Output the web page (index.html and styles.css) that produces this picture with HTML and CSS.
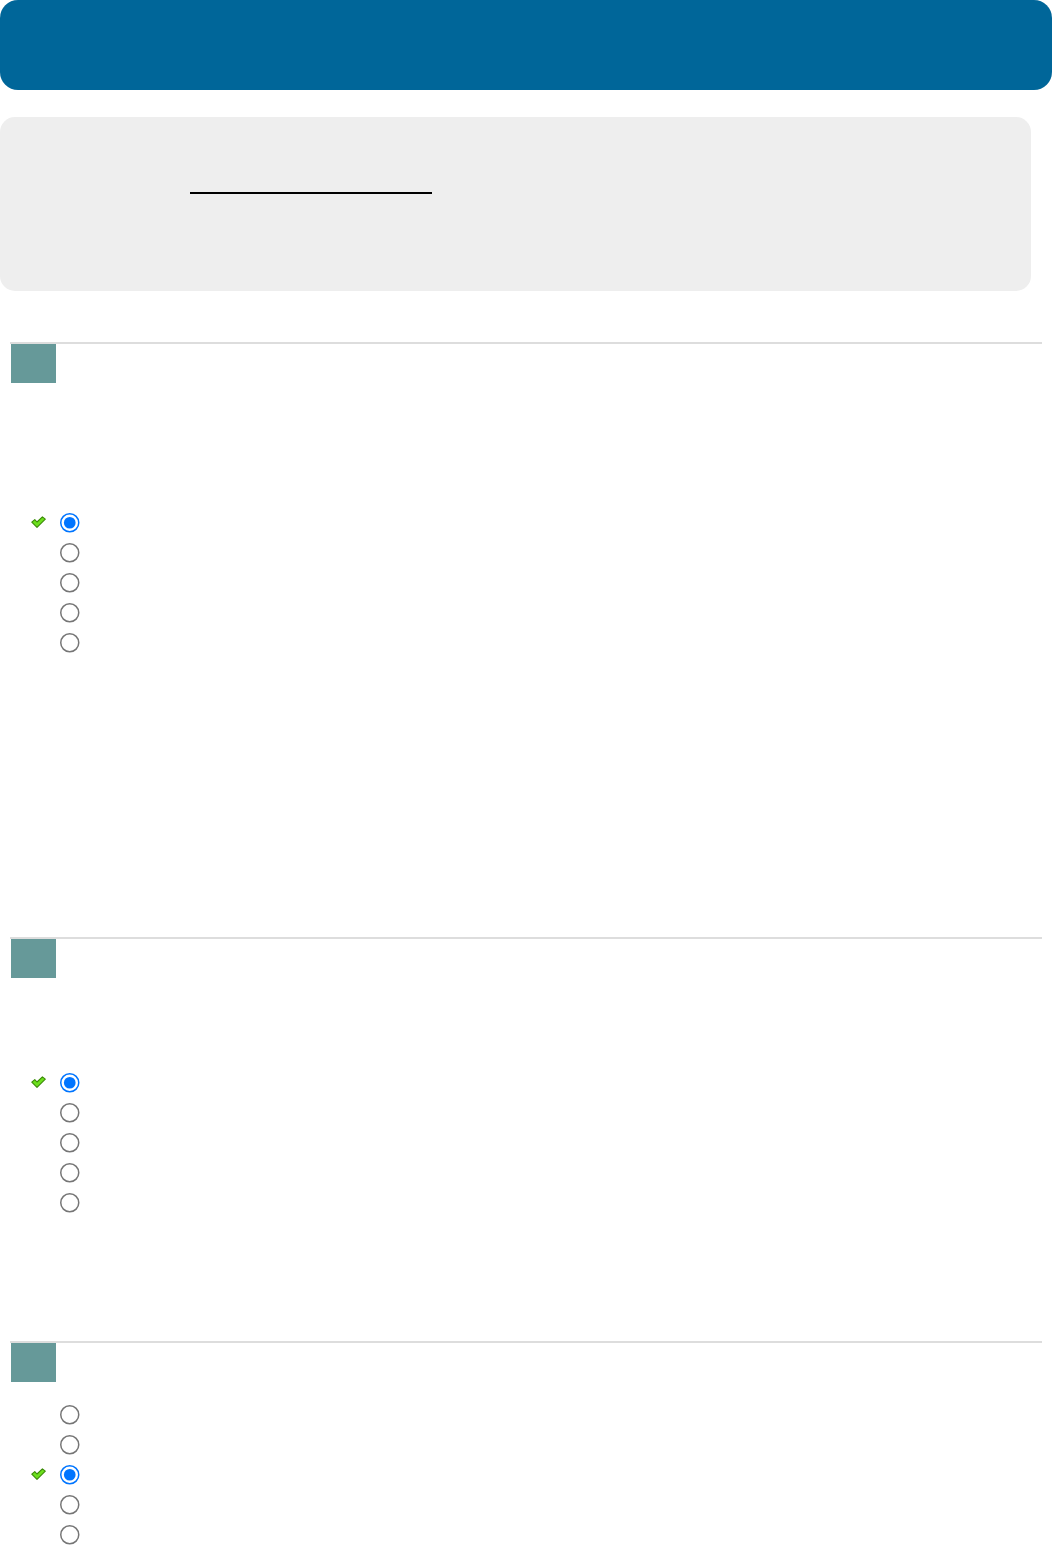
FILE: index.html
```html
<!DOCTYPE html>
<html>
<head>
  <title>Quiz review</title>
  <link rel="stylesheet" href="styles.css">
</head>
<body>
  <div class="banner"></div>

  <div class="summary">
    <span class="blank"></span>
  </div>

  <!-- question 1 -->
  <div class="que">
    <div class="qno"></div>
    <div class="qtext q1-text"></div>
    <div class="answers">
      <label class="opt"><span class="tick"><svg width="15" height="12" viewBox="0 0 15 12"><path d="M0.8 6.2 L3.8 3.6 L6 6 L11.4 0.8 L14.3 3.2 L6 11.3 Z" fill="#6ce01c" stroke="#3b8a08" stroke-width="1.1" stroke-linejoin="round"/></svg></span><input type="radio" name="q1" checked></label>
      <label class="opt"><span class="tick"></span><input type="radio" name="q1"></label>
      <label class="opt"><span class="tick"></span><input type="radio" name="q1"></label>
      <label class="opt"><span class="tick"></span><input type="radio" name="q1"></label>
      <label class="opt"><span class="tick"></span><input type="radio" name="q1"></label>
    </div>
    <div class="feedback q1-after"></div>
  </div>

  <!-- question 2 -->
  <div class="que">
    <div class="qno"></div>
    <div class="qtext q2-text"></div>
    <div class="answers">
      <label class="opt"><span class="tick"><svg width="15" height="12" viewBox="0 0 15 12"><path d="M0.8 6.2 L3.8 3.6 L6 6 L11.4 0.8 L14.3 3.2 L6 11.3 Z" fill="#6ce01c" stroke="#3b8a08" stroke-width="1.1" stroke-linejoin="round"/></svg></span><input type="radio" name="q2" checked></label>
      <label class="opt"><span class="tick"></span><input type="radio" name="q2"></label>
      <label class="opt"><span class="tick"></span><input type="radio" name="q2"></label>
      <label class="opt"><span class="tick"></span><input type="radio" name="q2"></label>
      <label class="opt"><span class="tick"></span><input type="radio" name="q2"></label>
    </div>
    <div class="feedback q2-after"></div>
  </div>

  <!-- question 3 -->
  <div class="que">
    <div class="qno"></div>
    <div class="qtext q3-text"></div>
    <div class="answers">
      <label class="opt"><span class="tick"></span><input type="radio" name="q3"></label>
      <label class="opt"><span class="tick"></span><input type="radio" name="q3"></label>
      <label class="opt"><span class="tick"><svg width="15" height="12" viewBox="0 0 15 12"><path d="M0.8 6.2 L3.8 3.6 L6 6 L11.4 0.8 L14.3 3.2 L6 11.3 Z" fill="#6ce01c" stroke="#3b8a08" stroke-width="1.1" stroke-linejoin="round"/></svg></span><input type="radio" name="q3" checked></label>
      <label class="opt"><span class="tick"></span><input type="radio" name="q3"></label>
      <label class="opt"><span class="tick"></span><input type="radio" name="q3"></label>
    </div>
    <div class="feedback q3-after"></div>
  </div>
</body>
</html>
```

FILE: styles.css
```css
body {
  font-family: Arial, "Liberation Sans", sans-serif;
  margin: 0;
  padding: 0;
}

.banner {
  height: 90px;
  background-color: #006699;
  border-radius: 18px;
}

.summary {
  width: 1031px;
  height: 174px;
  margin-top: 27px;
  background-color: #eeeeee;
  border-radius: 15px;
  padding-top: 75px;
  padding-left: 190px;
  box-sizing: border-box;
}

.blank {
  display: block;
  width: 242px;
  border-bottom: 2px solid #000;
}

.que {
  margin: 0 10px;
  border-top: 2px solid #dddddd;
}

.summary + .que {
  margin-top: 51px;
}

.qno {
  width: 45px;
  height: 39px;
  margin-left: 1px;
  background-color: #669999;
}

.q1-text { height: 125px; }
.q1-after { height: 279px; }
.q2-text { height: 90px; }
.q2-after { height: 123px; }
.q3-text { height: 18px; }
.q3-after { height: 40px; }

.answers {
  padding-left: 21px;
}

.opt {
  display: flex;
  align-items: center;
  height: 30px;
}

.tick {
  width: 15px;
  height: 12px;
  margin-right: 14px;
  margin-top: -2px;
}

.tick svg {
  display: block;
}

.opt input[type="radio"] {
  width: 13px;
  height: 13px;
  margin: 0;
  zoom: 1.5;
}
```
